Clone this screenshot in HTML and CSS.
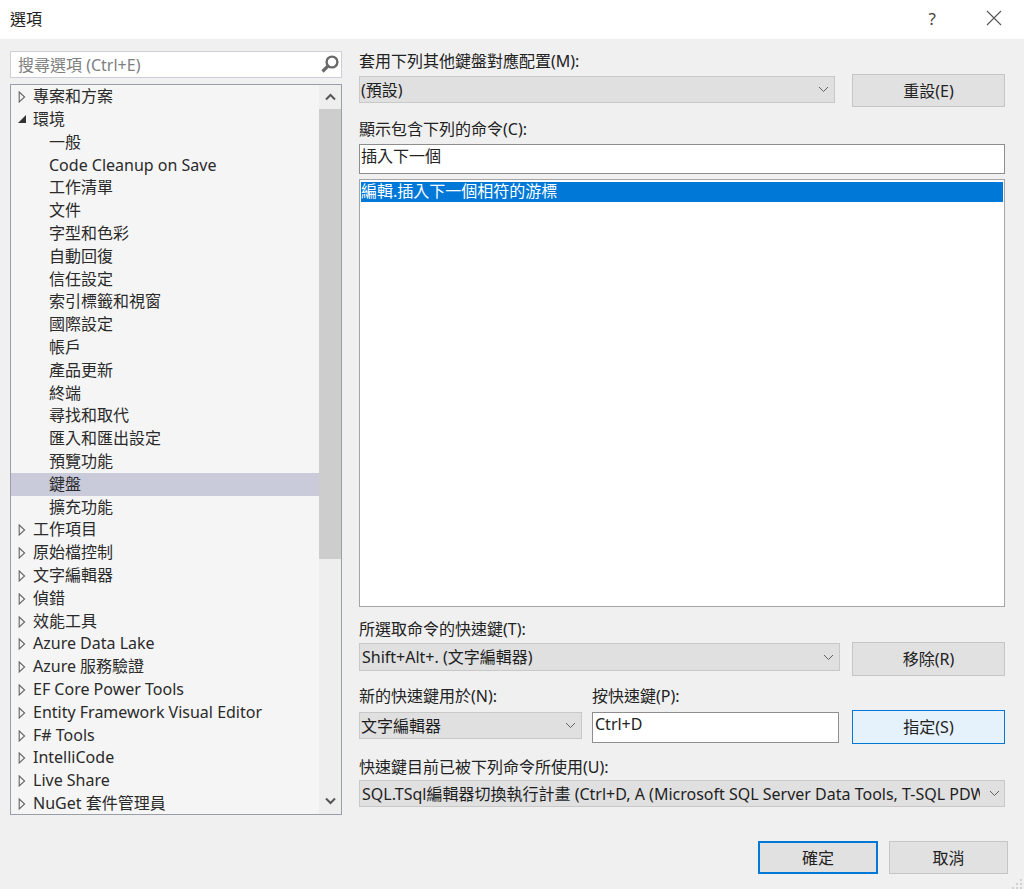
FILE: index.html
```html
<!DOCTYPE html>
<html lang="zh-Hant">
<head>
<meta charset="utf-8">
<title>選項</title>
<link rel="stylesheet" href="styles.css">
</head>
<body>
<svg class="defs" width="0" height="0" aria-hidden="true">
  <symbol id="tw" viewBox="0 0 8 12"><path d="M1.2 1L6.6 6L1.2 11Z" fill="none" stroke="#666" stroke-width="1.1"/></symbol>
  <symbol id="chev" viewBox="0 0 11 7"><path d="M1 1L5.5 5.5L10 1" fill="none" stroke="#606060" stroke-width="1"/></symbol>
</svg>
<div class="dialog">
  <header class="titlebar">
    <span class="title">選項</span>
    <span class="help">?</span>
    <svg class="close" width="16" height="16" viewBox="0 0 16 16"><path d="M1 1L15 15M15 1L1 15" stroke="#555" stroke-width="1.1" fill="none"/></svg>
  </header>
  <main class="content">
    <section class="left">
      <div class="search">
        <span class="search-text">搜尋選項 (Ctrl+E)</span>
        <svg width="20" height="20" viewBox="0 0 20 20"><circle cx="12" cy="8" r="5.4" fill="none" stroke="#6a6a6a" stroke-width="2.4"/><path d="M8.5 11.5L2.5 17.5" stroke="#6a6a6a" stroke-width="3.2"/></svg>
      </div>
      <div class="tree">
        <div class="rows">
          <div class="row"><svg class="tw"><use href="#tw"/></svg>專案和方案</div>
          <div class="row"><i class="tw-open"></i>環境</div>
          <div class="row sub">一般</div>
          <div class="row sub">Code Cleanup on Save</div>
          <div class="row sub">工作清單</div>
          <div class="row sub">文件</div>
          <div class="row sub">字型和色彩</div>
          <div class="row sub">自動回復</div>
          <div class="row sub">信任設定</div>
          <div class="row sub">索引標籤和視窗</div>
          <div class="row sub">國際設定</div>
          <div class="row sub">帳戶</div>
          <div class="row sub">產品更新</div>
          <div class="row sub">終端</div>
          <div class="row sub">尋找和取代</div>
          <div class="row sub">匯入和匯出設定</div>
          <div class="row sub">預覽功能</div>
          <div class="row sub sel">鍵盤</div>
          <div class="row sub">擴充功能</div>
          <div class="row"><svg class="tw"><use href="#tw"/></svg>工作項目</div>
          <div class="row"><svg class="tw"><use href="#tw"/></svg>原始檔控制</div>
          <div class="row"><svg class="tw"><use href="#tw"/></svg>文字編輯器</div>
          <div class="row"><svg class="tw"><use href="#tw"/></svg>偵錯</div>
          <div class="row"><svg class="tw"><use href="#tw"/></svg>效能工具</div>
          <div class="row"><svg class="tw"><use href="#tw"/></svg>Azure Data Lake</div>
          <div class="row"><svg class="tw"><use href="#tw"/></svg>Azure 服務驗證</div>
          <div class="row"><svg class="tw"><use href="#tw"/></svg>EF Core Power Tools</div>
          <div class="row"><svg class="tw"><use href="#tw"/></svg>Entity Framework Visual Editor</div>
          <div class="row"><svg class="tw"><use href="#tw"/></svg>F# Tools</div>
          <div class="row"><svg class="tw"><use href="#tw"/></svg>IntelliCode</div>
          <div class="row"><svg class="tw"><use href="#tw"/></svg>Live Share</div>
          <div class="row"><svg class="tw"><use href="#tw"/></svg>NuGet 套件管理員</div>
        </div>
        <div class="scrollbar">
          <div class="arrow"><svg width="11" height="8" viewBox="0 0 11 8"><path d="M1 6.5L5.5 2L10 6.5" fill="none" stroke="#555" stroke-width="2"/></svg></div>
          <div class="thumb"></div>
          <div class="arrow end"><svg width="11" height="8" viewBox="0 0 11 8"><path d="M1 1.5L5.5 6L10 1.5" fill="none" stroke="#555" stroke-width="2"/></svg></div>
        </div>
      </div>
    </section>
    <section class="right">
      <div class="label l-scheme">套用下列其他鍵盤對應配置(M):</div>
      <div class="line line-scheme">
        <div class="select s-scheme"><span class="val">(預設)</span><svg class="chev"><use href="#chev"/></svg></div>
        <div class="btn">重設(E)</div>
      </div>
      <div class="label l-cmd">顯示包含下列的命令(C):</div>
      <div class="input i-cmd">插入下一個</div>
      <div class="list"><div class="list-sel">編輯.插入下一個相符的游標</div></div>
      <div class="label l-cur">所選取命令的快速鍵(T):</div>
      <div class="line line-cur">
        <div class="select s-cur"><span class="val">Shift+Alt+. (文字編輯器)</span><svg class="chev"><use href="#chev"/></svg></div>
        <div class="btn">移除(R)</div>
      </div>
      <div class="line line-labels">
        <div class="label c-scope">新的快速鍵用於(N):</div>
        <div class="label">按快速鍵(P):</div>
      </div>
      <div class="line line-new">
        <div class="select s-scope"><span class="val">文字編輯器</span><svg class="chev"><use href="#chev"/></svg></div>
        <div class="input i-key">Ctrl+D</div>
        <div class="btn btn-hot">指定(S)</div>
      </div>
      <div class="label l-used">快速鍵目前已被下列命令所使用(U):</div>
      <div class="select s-used"><span class="val">SQL.TSql編輯器切換執行計畫 (Ctrl+D, A (Microsoft SQL Server Data Tools, T-SQL PDW))</span><svg class="chev"><use href="#chev"/></svg></div>
    </section>
  </main>
  <footer class="footer">
    <div class="btn ok">確定</div>
    <div class="btn cancel">取消</div>
  </footer>
  <svg class="grip" width="12" height="10" viewBox="0 0 12 10"><path d="M9 0h2v2H9zM5 4h2v2H5zM9 4h2v2H9zM1 8h2v2H1zM5 8h2v2H5zM9 8h2v2H9z" fill="#d2d2d2"/></svg>
</div>
</body>
</html>
```
FILE: styles.css
```css
* { box-sizing: border-box; }
html, body { margin: 0; padding: 0; }
body {
  width: 1024px;
  height: 889px;
  overflow: hidden;
  background: #f0f0f0;
  font-family: "Noto Sans", "Noto Sans CJK TC", sans-serif;
  font-size: 16px;
  color: #1e1e1e;
}
.defs { position: absolute; }
.dialog { display: flex; flex-direction: column; height: 889px; position: relative; }
.titlebar {
  height: 39px;
  background: #fff;
  display: flex;
  align-items: center;
  padding: 0 22px 3px 10px;
  flex: none;
}
.title { flex: 1; }
.help { font-size: 17px; color: #444; margin-right: 50px; }
.content { display: flex; padding: 12px 19px 0 10px; flex: none; height: 790px; }
.left { width: 332px; margin-right: 17px; flex: none; }
.search {
  height: 27px;
  background: #fff;
  border: 1px solid #ccced9;
  display: flex;
  align-items: center;
  justify-content: space-between;
  padding: 0 1px 2px 7px;
  color: #808080;
}
.tree {
  margin-top: 6px;
  height: 731px;
  border: 1px solid #9a9ea8;
  background: #f5f5f5;
  display: flex;
}
.rows { flex: 1; overflow: hidden; padding-top: 0.3px; }
.row {
  height: 22.8px;
  line-height: 22px;
  padding-left: 22px;
  white-space: nowrap;
  position: relative;
  color: #2a2a2a;
}
.row.sub { padding-left: 38px; }
.row.sel { background: #c9cbdb; }
.tw { position: absolute; left: 7px; top: 6px; width: 8px; height: 12px; }
.tw-open {
  position: absolute;
  left: 7px;
  top: 7px;
  border-style: solid;
  border-width: 0 0 8px 8px;
  border-color: transparent transparent #333 transparent;
}
.scrollbar {
  width: 22px;
  flex: none;
  background: #eee;
  display: flex;
  flex-direction: column;
}
.arrow { height: 24px; display: flex; align-items: center; justify-content: center; flex: none; }
.arrow.end { margin-top: auto; height: 26px; }
.thumb { height: 450px; background: #cdcdcd; flex: none; }
.right { flex: 1; min-width: 0; }
.label { line-height: 20px; height: 20px; color: #222; white-space: nowrap; }
.line { display: flex; align-items: flex-start; }
.line-scheme { height: 33px; margin-top: 3px; }
.line-scheme .select { margin-top: 2px; }
.btn {
  width: 153px;
  height: 33px;
  margin-left: auto;
  padding-bottom: 2px;
  background: #e1e1e1;
  border: 1px solid #c5c5c5;
  display: flex;
  align-items: center;
  justify-content: center;
  color: #222;
}
.select {
  height: 27px;
  background: #e0e0e0;
  border: 1px solid #c8c8c8;
  display: flex;
  align-items: center;
  padding: 0 5px 2px 1px;
  flex: none;
}
.val { flex: 1; min-width: 0; overflow: hidden; white-space: nowrap; }
.chev { flex: none; width: 11px; height: 7px; margin: 2px 0 0 5px; }
.s-scheme { width: 476px; }
.l-cmd { margin-top: 12px; }
.input { background: #fff; border: 1px solid #8e8e8e; color: #222; }
.i-cmd { height: 30px; width: 646px; margin-top: 5px; line-height: 22px; padding-left: 1px; }
.list {
  width: 646px;
  height: 428px;
  margin-top: 5px;
  background: #fff;
  border: 1px solid #a5a5a5;
  padding: 2px 1px 0 1px;
}
.list-sel { height: 20px; line-height: 19px; background: #0078d7; color: #fff; }
.l-cur { margin-top: 12px; }
.line-cur { height: 34px; margin-top: 3px; }
.line-cur .select { margin-top: 1px; height: 28px; }
.line-cur .btn { height: 34px; }
.s-cur { width: 481px; padding-left: 2px; }
.line-labels { margin-top: 10px; }
.c-scope { width: 233px; }
.line-new { margin-top: 4px; height: 34px; }
.line-new .select { margin-top: 2px; }
.s-scope { width: 223px; }
.i-key { width: 247px; height: 31px; margin: 2px 0 0 10px; line-height: 22px; padding-left: 2px; }
.btn-hot { background: #e5f1fb; border: 1px solid #0078d7; height: 34px; }
.l-used { margin-top: 13px; }
.s-used { width: 646px; margin-top: 3px; padding-left: 2px; padding-right: 4px; }
.s-used .val { margin-right: 4px; }
.footer { display: flex; padding: 12px 16px 0 758px; }
.ok { width: 120px; margin: 0; border: 2px solid #0078d7; }
.cancel { width: 119px; margin-left: 11px; }
.grip { position: absolute; right: 1px; bottom: 0; }
```
